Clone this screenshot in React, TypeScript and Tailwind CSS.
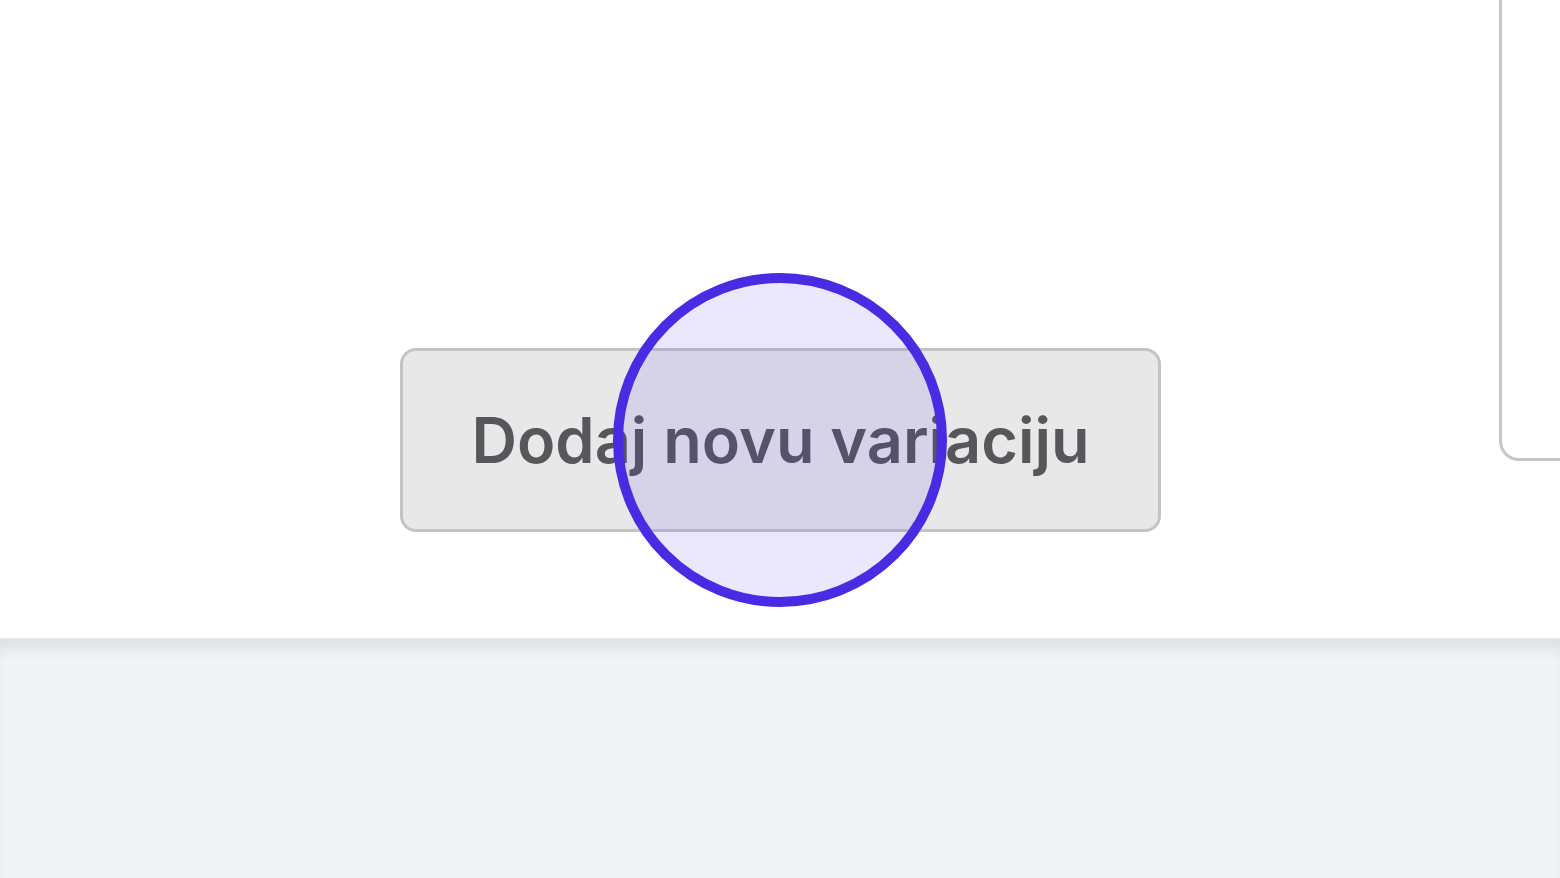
export default function App() {
  return (
    <div className="w-[1560px] h-[878px] overflow-hidden flex flex-col bg-[#f2f3f5] font-['Inter',_'Liberation_Sans',_sans-serif]">
      <div className="relative h-[638px] bg-white flex items-start">
        <div className="w-[1499px] pl-[400px] pt-[348px]">
          <button className="w-[761px] h-[184px] rounded-[16px] border-[3px] border-[#c3c3c3] bg-[#e8e8e8] text-[#57565b] text-[63px] font-semibold flex items-center justify-center">
            Dodaj novu variaciju
          </button>
        </div>
        <div className="flex-1 h-[461px] border-l-[3px] border-b-[3px] border-[#c6c6c6] rounded-bl-[20px] bg-white" />
        {/* click indicator */}
        <div className="absolute left-[613px] top-[273px] w-[334px] h-[334px] rounded-full border-[10px] border-[#4a2ae3] bg-[rgba(90,60,230,0.12)]" />
      </div>
      <div className="flex-1 border-t border-[#e6e7e9] shadow-[inset_0_16px_18px_-8px_rgba(0,0,0,0.09)]" />
    </div>
  );
}
